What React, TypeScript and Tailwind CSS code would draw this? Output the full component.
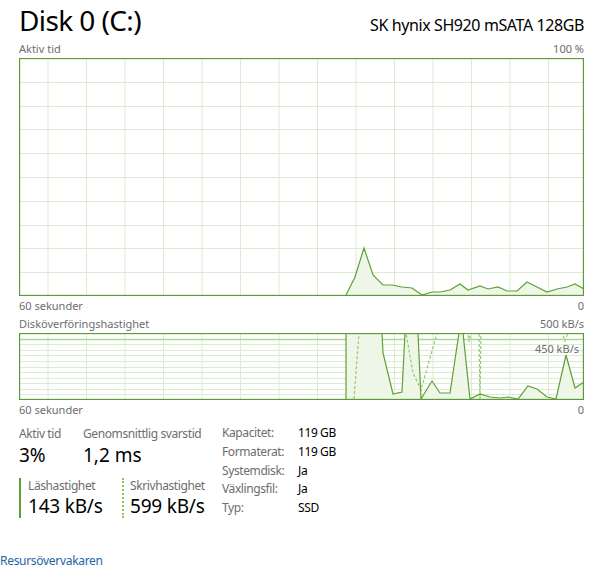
const W = 565;
const VLINES = [29, 67.5, 106, 144.5, 183, 221.5, 260, 298.5, 337, 375.5, 414, 452.5, 491, 529.5];

const activePts: [number, number][] = [
  [327, 237], [336, 219], [345, 190], [354, 217], [364, 227], [373, 227], [383, 229], [393, 230],
  [403, 237], [413, 234], [421, 234], [431, 232], [441, 226], [449, 232], [461, 228], [469, 231],
  [479, 229], [488, 233], [498, 233], [508, 224], [518, 229], [528, 234], [538, 231], [548, 229],
  [556, 226], [565, 231],
];

const readPts: [number, number][] = [
  [327, 66], [327, 0], [363, 0], [364, 20], [374, 61], [383, 59], [386, 0], [399, 0], [402, 66],
  [413, 48], [421, 60], [431, 60], [440, 0], [444, 0], [451, 66], [461, 61], [471, 64], [481, 65],
  [489, 64], [499, 66], [509, 53], [518, 56], [528, 64], [537, 66], [547, 22], [556, 55], [565, 49],
];

const writePts: [number, number][] = [
  [335, 66], [340, 0], [387, 0], [394, 40], [402, 57], [418, 0], [449, 0], [450, 9], [452, 0],
  [460, 0], [461, 66], [462, 0], [543, 0], [546, 8], [549, 0], [565, 0],
];

const toPath = (pts: [number, number][]) => pts.map((p, i) => `${i ? "L" : "M"}${p[0]} ${p[1]}`).join(" ");

function Chart({ h, rows, children }: { h: number; rows: number; children?: React.ReactNode }) {
  const hl = [];
  for (let i = 1; i < rows; i++) hl.push((h * i) / rows);
  return (
    <svg width={W} height={h} className="block">
      <rect x={0} y={0} width={W} height={h} fill="#fff" />
      {VLINES.map((x) => (
        <line key={"v" + x} x1={x} x2={x} y1={0} y2={h} stroke="#dcebd3" strokeWidth={1} />
      ))}
      {hl.map((y) => (
        <line key={"h" + y} x1={0} x2={W} y1={Math.round(y) + 0.5} y2={Math.round(y) + 0.5} stroke="#dcebd3" strokeWidth={1} />
      ))}
      {children}
      <rect x={0.5} y={0.5} width={W - 1} height={h - 1} fill="none" stroke="#5b9a34" strokeWidth={1.3} />
    </svg>
  );
}

export default function App() {
  const label = "text-[#6d6d6d]";
  const small = "text-[12px] tracking-[-0.4px]";
  return (
    <div className="w-[605px] h-[579px] bg-white overflow-hidden text-black" style={{ fontFamily: '"Noto Sans", "Open Sans", sans-serif' }}>
      <div className="pl-[19px] pr-[21px]">
        <div className="flex items-baseline justify-between h-[40px]">
          <div className="text-[28px] leading-[40px] tracking-[-0.6px]">Disk 0 (C:)</div>
          <div className="text-[16px] leading-[20px] tracking-[-0.4px]">SK hynix SH920 mSATA 128GB</div>
        </div>
        <div className={`flex justify-between h-[18px] text-[11px] leading-[18px] ${label}`}>
          <span>Aktiv tid</span>
          <span>100 %</span>
        </div>
        <Chart h={238} rows={10}>
          <path d={toPath(activePts) + " L565 238 L327 238 Z"} fill="#eef6e8" />
          <path d={toPath(activePts)} fill="none" stroke="#5fa035" strokeWidth={1.2} />
        </Chart>
        <div className={`flex justify-between h-[20px] text-[11px] leading-[20px] ${label}`}>
          <span>60 sekunder</span>
          <span>0</span>
        </div>
        <div className={`flex justify-between h-[17px] text-[11px] leading-[15px] ${label}`}>
          <span>Disköverföringshastighet</span>
          <span>500 kB/s</span>
        </div>
        <div className="relative">
          <Chart h={67} rows={12}>
            <line x1={0} x2={W} y1={6.5} y2={6.5} stroke="#a9d98a" strokeWidth={1.5} />
            <path d={toPath(readPts) + " L565 67 L327 67 Z"} fill="#eef6e8" />
            <path d={toPath(writePts)} fill="none" stroke="#93cc66" strokeWidth={1.2} strokeDasharray="3 2" />
            <path d={toPath(readPts)} fill="none" stroke="#5fa035" strokeWidth={1.2} />
          </Chart>
          <span className={`absolute right-[5px] top-[9px] text-[11px] leading-[14px] ${label}`}>450 kB/s</span>
        </div>
        <div className={`flex justify-between h-[20px] text-[11px] leading-[20px] ${label}`}>
          <span>60 sekunder</span>
          <span>0</span>
        </div>
        <div className="flex pt-[4px]">
          <div className="w-[203px]">
            <div className="flex">
              <div className="w-[64px]">
                <div className={`${small} leading-[19px] ${label}`}>Aktiv tid</div>
                <div className="text-[19px] leading-[24px]">3%</div>
              </div>
              <div>
                <div className={`${small} leading-[19px] ${label}`}>Genomsnittlig svarstid</div>
                <div className="text-[19px] leading-[24px]">1,2 ms</div>
              </div>
            </div>
            <div className="flex mt-[11px]">
              <div className="w-[103px] flex">
                <div className="w-[2px] bg-[#5fa035]" />
                <div className="pl-[7px]">
                  <div className={`${small} leading-[16px] ${label}`}>Läshastighet</div>
                  <div className="text-[19px] leading-[24px] tracking-[-0.2px]">143 kB/s</div>
                </div>
              </div>
              <div className="flex">
                <div className="w-[2px] border-l-2 border-dotted border-[#8cc75d]" />
                <div className="pl-[6px]">
                  <div className={`${small} leading-[16px] ${label}`}>Skrivhastighet</div>
                  <div className="text-[19px] leading-[24px] tracking-[-0.2px]">599 kB/s</div>
                </div>
              </div>
            </div>
          </div>
          <div className={`grid grid-cols-[76px_auto] ${small} leading-[18px]`}>
            <span className={label}>Kapacitet:</span>
            <span>119 GB</span>
            <span className={label}>Formaterat:</span>
            <span>119 GB</span>
            <span className={label}>Systemdisk:</span>
            <span>Ja</span>
            <span className={label}>Växlingsfil:</span>
            <span>Ja</span>
            <span className={label}>Typ:</span>
            <span>SSD</span>
          </div>
        </div>
      </div>
      <div className="mt-[35px] text-[12px] leading-[16px] tracking-[-0.3px] text-[#1d64a8]">Resursövervakaren</div>
    </div>
  );
}
